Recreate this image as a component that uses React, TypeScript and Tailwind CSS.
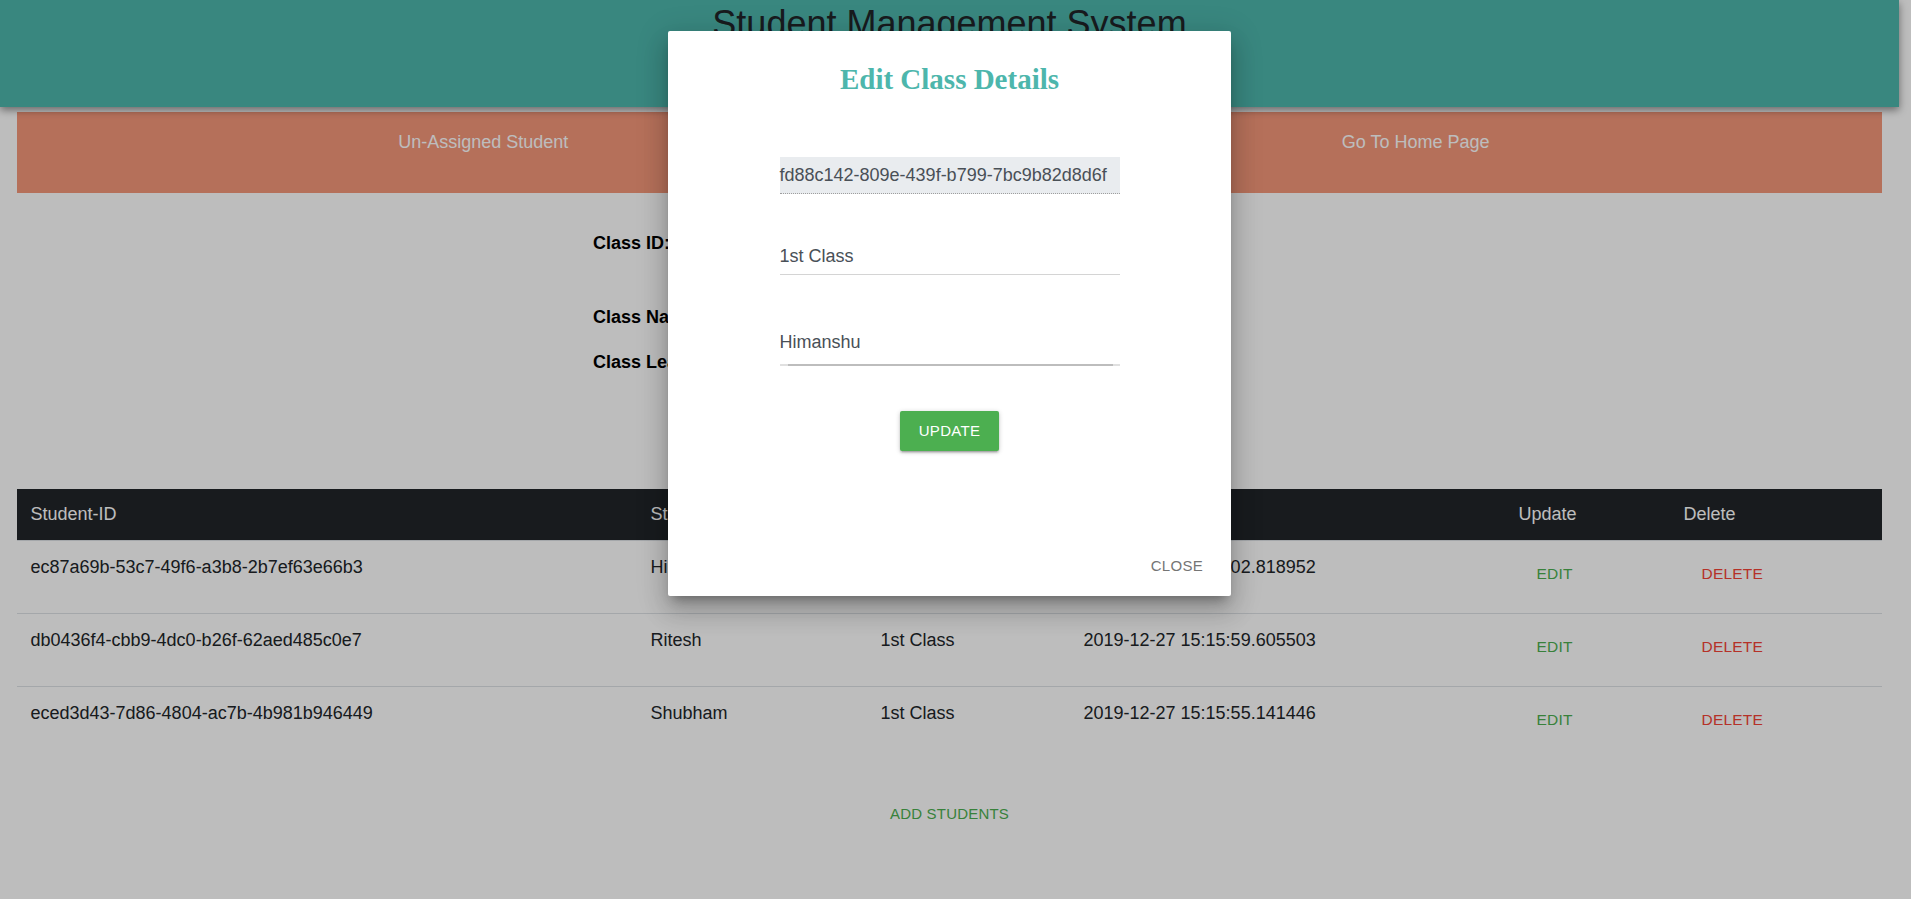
import React from "react";

const rows = [
  { id: "ec87a69b-53c7-49f6-a3b8-2b7ef63e66b3", name: "Himanshu", cls: "1st Class", date: "2019-12-27 15:16:02.818952" },
  { id: "db0436f4-cbb9-4dc0-b26f-62aed485c0e7", name: "Ritesh", cls: "1st Class", date: "2019-12-27 15:15:59.605503" },
  { id: "eced3d43-7d86-4804-ac7b-4b981b946449", name: "Shubham", cls: "1st Class", date: "2019-12-27 15:15:55.141446" },
];

const cols = "grid grid-cols-[620px_230px_203px_435px_165px_1fr]";

export default function App() {
  return (
    <div className="relative w-[1911px] h-[899px] overflow-hidden bg-white font-['Liberation_Sans',Arial,sans-serif]">
      <div className="w-[1899px]">
        <header className="relative z-10 h-[107px] bg-[#4db6ac] pt-[4px] text-center shadow-[0_3px_8px_rgba(0,0,0,0.45)]">
          <h1 className="text-[36px] leading-[40px] font-normal text-[#212529]">Student Management System</h1>
        </header>
        <nav className="mx-[17px] mt-[5px] h-[81px] bg-[#f5977a] grid grid-cols-2 text-[18px] leading-[27px] text-white">
          <div className="pt-[17px] text-center">Un-Assigned Student</div>
          <div className="pt-[17px] text-center">Go To Home Page</div>
        </nav>

        <section className="pt-[37px] pl-[593px] text-[18px] leading-[27px] text-black">
          <div className="flex">
            <span className="w-[127px] font-bold">Class ID:</span>
            <span>fd88c142-809e-439f-b799-7bc9b82d8d6f</span>
          </div>
          <div className="flex mt-[47px]">
            <span className="w-[127px] font-bold">Class Name:</span>
            <span>1st Class</span>
          </div>
          <div className="flex mt-[18px]">
            <span className="w-[127px] font-bold">Class Lead:</span>
            <span>Himanshu</span>
          </div>
        </section>

        <div className="mx-[17px] mt-[113px] text-[18px] leading-[27px]">
          <div className={`${cols} h-[51px] bg-[#212529] text-white`}>
            {["Student-ID", "Student Name", "Class", "Created At", "Update", "Delete"].map((h) => (
              <div key={h} className="px-[13.5px] pt-[11.5px]">{h}</div>
            ))}
          </div>
          {rows.map((r) => (
            <div key={r.id} className={`${cols} h-[73px] border-t border-[#dee2e6] text-[#212529]`}>
              <div className="px-[13.5px] pt-[12.5px]">{r.id}</div>
              <div className="px-[13.5px] pt-[12.5px]">{r.name}</div>
              <div className="px-[13.5px] pt-[12.5px]">{r.cls}</div>
              <div className="px-[13.5px] pt-[12.5px]">{r.date}</div>
              <div className="px-[13.5px] pt-[12.5px]">
                <span className="inline-block h-[40.5px] px-[18px] text-[15.5px] leading-[40.5px] tracking-[0.2px] text-[#4caf50]">EDIT</span>
              </div>
              <div className="px-[13.5px] pt-[12.5px]">
                <span className="inline-block h-[40.5px] px-[18px] text-[15.5px] leading-[40.5px] tracking-[0.2px] text-[#f44336]">DELETE</span>
              </div>
            </div>
          ))}
        </div>

        <div className="mt-[35px] text-center">
          <span className="inline-block h-[40.5px] px-[18px] text-[15px] leading-[40.5px] tracking-[0.2px] text-[#4caf50]">ADD STUDENTS</span>
        </div>
      </div>

      <div className="absolute inset-0 z-20 bg-black/[0.26]" />

      <div className="absolute top-0 left-0 z-30 w-[1899px] flex justify-center pt-[31px]">
        <div className="w-[563px] h-[565px] bg-white rounded-[2px] flex flex-col items-center pt-[30px] shadow-[0_16px_24px_2px_rgba(0,0,0,0.14),0_6px_30px_5px_rgba(0,0,0,0.12),0_8px_10px_-5px_rgba(0,0,0,0.3)]">
          <h4 className="font-['Liberation_Serif',serif] font-bold text-[29px] leading-[36px] text-[#4db6ac]">Edit Class Details</h4>
          <div className="mt-[60px] w-[340px] h-[37px] bg-[#e9ecef] border-b border-dotted border-[#9e9e9e] text-[18px] leading-[36px] text-[#495057]">
            fd88c142-809e-439f-b799-7bc9b82d8d6f
          </div>
          <div className="mt-[48.5px] w-[340px] pb-[4px] border-b border-[#d4d4d4] text-[18px] leading-[27px] text-[#495057]">
            1st Class
          </div>
          <div className="mt-[54px] w-[340px]">
            <div className="pb-[8px] text-[18px] leading-[27px] text-[#495057]">Himanshu</div>
            <div className="relative h-[2px] bg-[#e0e0e0]">
              <div className="absolute inset-y-0 left-[8px] right-[7px] bg-[#bdbdbd]" />
            </div>
          </div>
          <button className="mt-[45.5px] w-[99px] h-[40px] bg-[#4caf50] text-white text-[15px] tracking-[0.3px] rounded-[2px] shadow-[0_2px_2px_0_rgba(0,0,0,0.14),0_3px_1px_-2px_rgba(0,0,0,0.12),0_1px_5px_0_rgba(0,0,0,0.2)]">
            UPDATE
          </button>
          <div className="mt-auto self-end mr-[28px] mb-[12px] h-[36px] leading-[36px] text-[15px] tracking-[0.3px] text-[#757575]">
            CLOSE
          </div>
        </div>
      </div>
    </div>
  );
}
